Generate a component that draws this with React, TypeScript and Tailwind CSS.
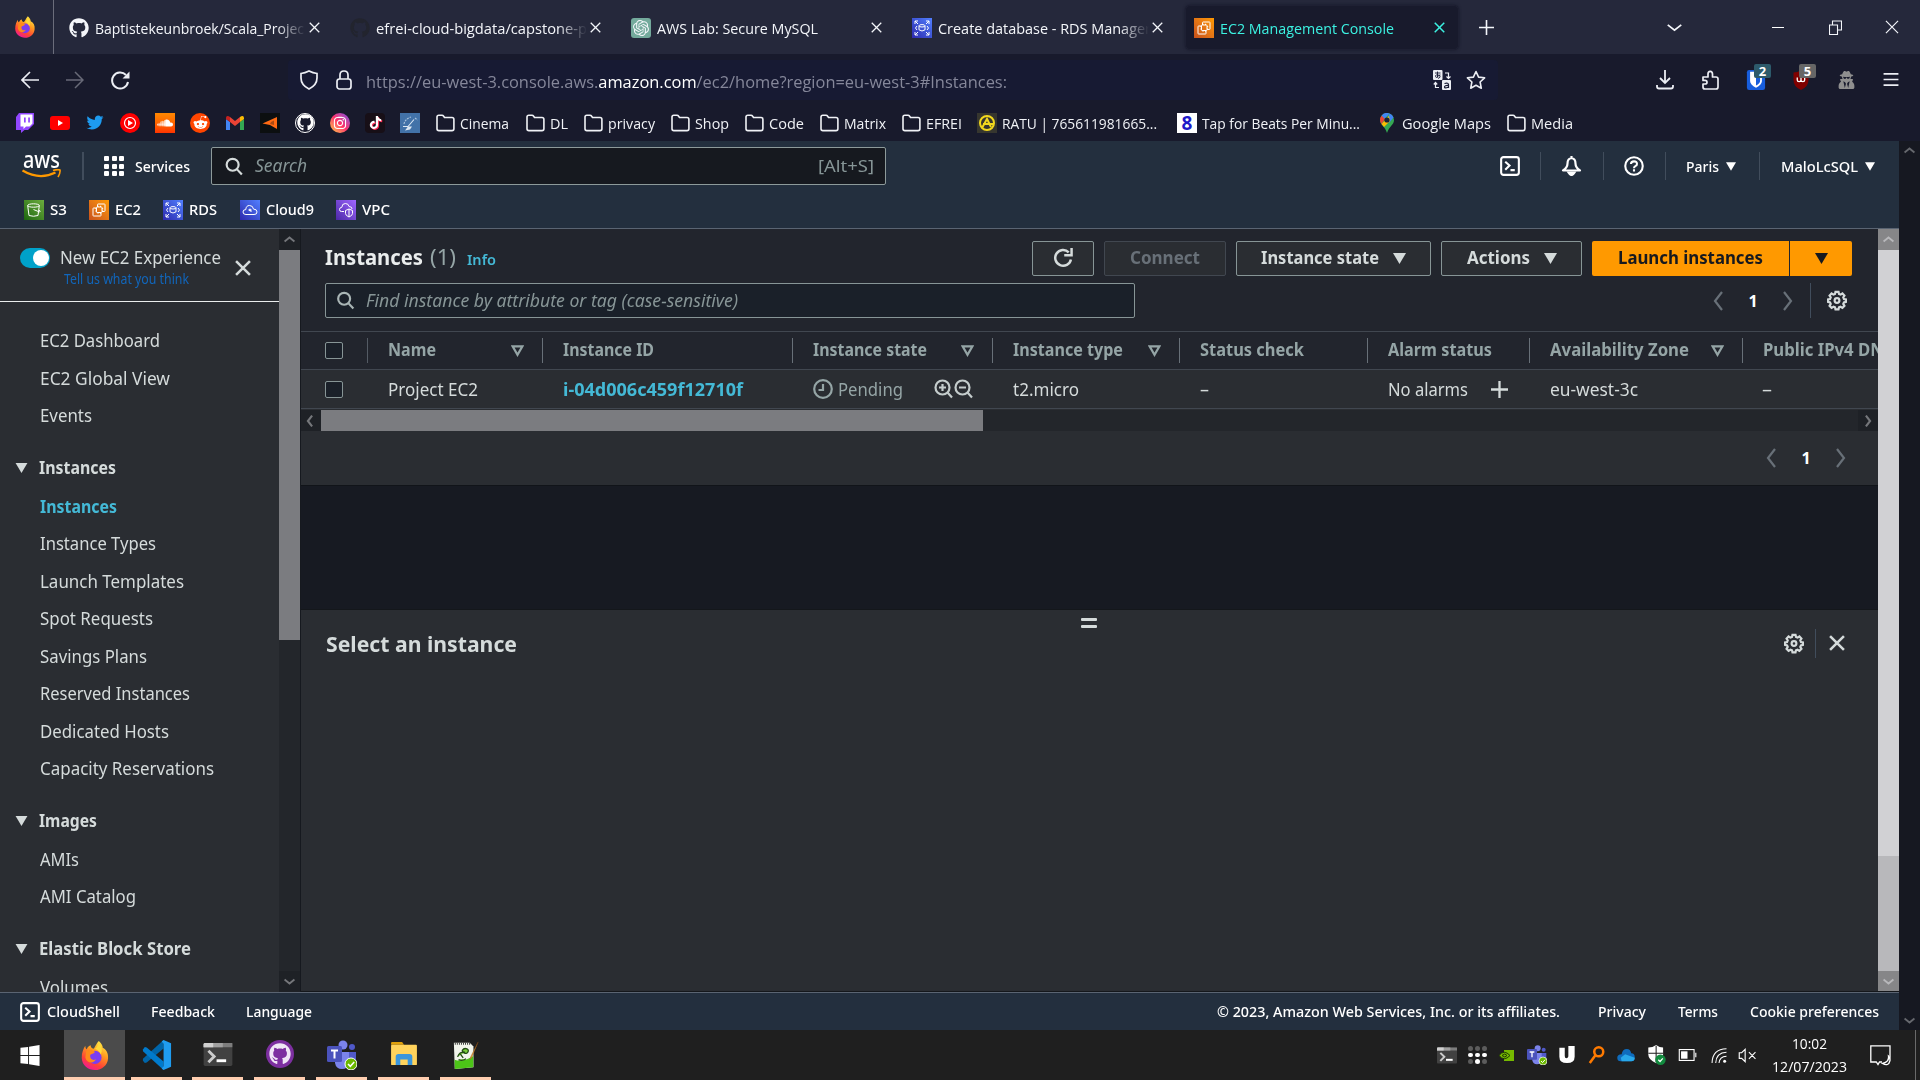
import React, { useLayoutEffect, useRef, useState } from "react";
import {
  FaTwitter, FaRedditAlien, FaSoundcloud, FaGithub, FaInstagram, FaTiktok,
  FaUserSecret,
} from "react-icons/fa";
import { SiOpenai } from "react-icons/si";

type FitProps = { w: number; c?: string; children: React.ReactNode };

/* A label that condenses its glyphs to fill exactly the given width. */
function Fit({ w, c = "", children }: FitProps) {
  const ref = useRef<HTMLSpanElement>(null);
  const [scale, setScale] = useState(1);
  useLayoutEffect(() => {
    const el = ref.current;
    if (!el) return;
    const cur = el.getBoundingClientRect().width;
    if (cur > 0) setScale(w / cur);
  }, [w]);
  return (
    <span className={"block shrink-0 whitespace-nowrap " + c} style={{ width: w }}>
      <span ref={ref} className="inline-block origin-left whitespace-nowrap" style={{ transform: `scaleX(${scale})` }}>
        {children}
      </span>
    </span>
  );
}

type IconProps = { c?: string; children?: React.ReactNode; box?: string; sw?: number };
function Svg({ c = "w-5 h-5", box = "0 0 20 20", sw = 1.6, children }: IconProps) {
  return (
    <svg viewBox={box} className={"block shrink-0 " + c} fill="none" stroke="currentColor" strokeWidth={sw}>
      {children}
    </svg>
  );
}

const Cross = ({ c = "w-[11px] h-[11px]", sw = 1.4 }: { c?: string; sw?: number }) => (
  <Svg c={c} box="0 0 12 12" sw={sw}><path d="M.8.8l10.4 10.4M11.2.8L.8 11.2" /></Svg>
);
const Tri = ({ c = "w-[13px] h-[11px]" }: { c?: string }) => (
  <Svg c={c} box="0 0 13 11" sw={0}><path d="M0 0h13L6.5 11z" fill="currentColor" /></Svg>
);
const Chevron = ({ dir, c, sw = 2 }: { dir: "l" | "r" | "u" | "d"; c: string; sw?: number }) => {
  const d = { l: "M9 1L2 10l7 9", r: "M2 1l7 9-7 9", u: "M1 9l9-7 9 7", d: "M1 2l9 7 9-7" }[dir];
  return <Svg c={c} box={dir === "l" || dir === "r" ? "0 0 11 20" : "0 0 20 11"} sw={sw}><path d={d} /></Svg>;
};
const Magnifier = ({ c = "w-[19px] h-[21px]", sw = 2.4 }: { c?: string; sw?: number }) => (
  <Svg c={c} box="0 0 19 21" sw={sw}><circle cx="8" cy="8.6" r="6.6" /><path d="M12.6 13.4l5.6 6" /></Svg>
);
const Gear = () => (
  <Svg c="w-[20px] h-[21px]" box="0 0 21 21" sw={2.3}>
    <path d="M8.9 1.4h3.2l.5 2.2 1.6.7 2-1.2 2.1 2.2-1.2 1.9.7 1.7 2.1.4v2.6l-2.1.6-.7 1.6 1.2 2-2.1 2.1-2-1.2-1.6.7-.5 2.1H8.9l-.5-2.1-1.6-.7-2 1.2-2.1-2.1 1.2-2-.7-1.6-2.1-.6V9.300l2.100-.4.7-1.700-1.200-1.900 2.100-2.200 2 1.200 1.600-.7z" />
    <circle cx="10.5" cy="10.5" r="2.5" />
  </Svg>
);
const ShellIcon = ({ c = "w-[21px] h-[21px]" }: { c?: string }) => (
  <Svg c={c} box="0 0 21 21" sw={2.2}><rect x="1.2" y="1.2" width="18.6" height="18.6" rx="2.5" /><path d="M5.5 6l4.500 4-4.500 4.500M11 14.800h4.500" /></Svg>
);
const Folder = () => (
  <Svg c="w-[19px] h-[18px]" box="0 0 19 18" sw={1.6}>
    <path d="M1 14.800V3Q1 1.200 2.800 1.200H6q1 0 1.500.8l1 1.500H16q1.900 0 1.900 1.900v9.300q0 1.900-1.900 1.900H2.900Q1 16.600 1 14.800z" />
  </Svg>
);

const Firefox = ({ c, id }: { c: string; id: string }) => (
  <svg viewBox="0 0 28 30" className={"block shrink-0 " + c}>
    <defs>
      <linearGradient id={id} x1=".8" y1="0" x2=".3" y2="1">
        <stop offset="0" stopColor="#fff14a" /><stop offset=".4" stopColor="#ff9a1f" /><stop offset=".75" stopColor="#ff4137" /><stop offset="1" stopColor="#f0189a" />
      </linearGradient>
    </defs>
    <path d="M18 0c3 3 4 5 4 7 4 2 6 6 5.500 11C27 25 21 30 14 30S.5 25 .3 17.500C.2 12 2 8 4 5c0 2 .5 3 1.500 3.500C6.500 6 8 4.800 9.500 4.500c0 2 1 3 3 3.500C14 7 15 3 18 0z" fill={`url(#${id})`} />
    <circle cx="14" cy="17" r="6.800" fill="#7a3df0" />
    <path d="M5 10c4-2 7-1 9 1.500-1 2-4 1.800-5 3C8.500 19 12 20.500 15 19c-2 5-10 4-11-2z" fill="#ff8a1a" />
    <path d="M18 1c3 4 4 9 2 13-1-3-3-5-6-6 2-1 3.500-4 4-7z" fill="#ffd93a" />
  </svg>
);

const Ec2Glyph = () => (<><path d="M7.500 8H4.600Q4 8 4 8.600v6.800q0 .6.600.6h6.800q.6 0 .6-.6V12.800" /><path d="M8.500 7V4.600q0-.6.600-.6h6.300q.6 0 .6.600v6.300q0 .6-.6.600H13" /><rect x="7.500" y="7" width="5.500" height="5.500" rx=".6" /><path d="M9 5.800V7M11.500 5.800V7M9 12.500v1.200M11.500 12.500v1.200M6.300 8.700h1.200M6.300 11h1.200M13 8.700h1.200M13 11h1.200" /></>);
function Service({ kind, c = "" }: { kind: string; c?: string }) {
  const bg: Record<string, string> = {
    S3: "bg-linear-to-tr from-[#1b660f] to-[#6cae3e]",
    EC2: "bg-linear-to-tr from-[#c8511b] to-[#ff9900]",
    RDS: "bg-linear-to-tr from-[#2e27ad] to-[#527fff]",
    Cloud9: "bg-linear-to-tr from-[#2e27ad] to-[#527fff]",
    VPC: "bg-linear-to-tr from-[#4d27a8] to-[#a166ff]",
  };
  return (
    <span className={"block w-5 h-5 shrink-0 text-white " + bg[kind] + " " + c}>
      <Svg sw={1}>
        {kind === "S3" && <><ellipse cx="9.5" cy="5.5" rx="5.8" ry="1.7" /><path d="M3.700 5.500L5 15.500q4.500 1.500 9 0l1.300-10M9.500 9.500l6 2.500q1.500-.5-.3-2" /></>}
        {kind === "EC2" && <Ec2Glyph />}
        {kind === "RDS" && <><path d="M3 6V3h3M3 3l3 3M14 3h3v3M17 3l-3 3M3 14v3h3M3 17l3-3M17 14v3h-3M17 17l-3-3" /><ellipse cx="10" cy="7.800" rx="3" ry="1.200" /><path d="M7 7.800v4q3 2.400 6 0v-4M5 8l-1.500 2L5 12M15 8l1.500 2-1.500 2" /></>}
        {kind === "Cloud9" && <><path d="M6 14.500q-3 0-3-2.500t2.800-2.400Q6 5.500 9.500 5.500t4 3.600q3.500 0 3.500 2.800t-3 2.600zM11 12V9.300H9v1.300h2" /></>}
        {kind === "VPC" && <><path d="M8 11.500H5.500Q3.500 11.500 3.500 9.500T5.800 7.300Q6 3.500 9.300 3.500t3.800 3q3 .2 3 2.500" /><path d="M9.500 10.500l3.500-1.500 3.500 1.500v3q0 2-3.500 3.500-3.500-1.500-3.500-3.500zM13 9v8" /></>}
      </Svg>
    </span>
  );
}

function Tab({ icon, text, tw, fade, lead }: { icon: React.ReactNode; text: string; tw: number; fade?: boolean; lead: string }) {
  return (
    <div className={"flex items-center w-[281px] h-full shrink-0 " + lead}>
      <span className="mt-[2px] shrink-0">{icon}</span>
      <div className={"ml-[6px] mt-[2px] w-[211px] overflow-hidden " + (fade ? "[mask-image:linear-gradient(to_right,black_86%,transparent_100%)]" : "")}>
        <Fit w={tw} c="text-[15px] leading-[22px]">{text}</Fit>
      </div>
      <Cross c="w-[11px] h-[11px] ml-[3px]" />
    </div>
  );
}

function TabBar() {
  return (
    <div className="flex items-center h-[54px] bg-[#25283b] text-[#f4f6fa]">
      <div className="w-[54px] h-full flex items-center pl-[15px] border-r border-[#6b6d7b]"><Firefox c="w-5 h-6" id="ffa" /></div>
      <Tab lead="ml-[15px]" icon={<FaGithub className="w-5 h-5 shrink-0" />} text="Baptistekeunbroek/Scala_Projec" tw={209} fade />
      <Tab lead="" icon={<FaGithub className="w-5 h-5 shrink-0 text-[#22242e]" />} text="efrei-cloud-bigdata/capstone-p" tw={211} fade />
      <Tab lead="" icon={<span className="w-5 h-5 rounded-[3px] bg-[#74aa9c] grid place-items-center shrink-0"><SiOpenai className="w-4 h-4" /></span>} text="AWS Lab: Secure MySQL" tw={161} />
      <Tab lead="" icon={<Service kind="RDS" />} text="Create database - RDS Manager" tw={213} fade />
      <div className="-ml-[8px] w-[274px] h-[45px] rounded-[5px] bg-[#181a2c] border border-[#1e2033] shadow-[0_0_3px_#15172a] flex items-center pl-[8px] text-[#3cf2e2]">
        <Service kind="EC2" c="mt-[2px]" />
        <Fit w={174} c="ml-[6px] mt-[2px] text-[15px] leading-[22px]">EC2 Management Console</Fit>
        <Cross c="w-[11px] h-[11px] ml-[40px]" sw={1.6} />
      </div>
      <Svg c="w-[15px] h-[15px] ml-[20px]" box="0 0 15 15" sw={1.6}><path d="M7.500 0v15M0 7.500h15" /></Svg>
      <Chevron dir="d" c="w-[15px] h-[9px] ml-[173px]" sw={2.400} />
      <span className="block w-[12px] h-[1px] bg-white ml-[90px]" />
      <Svg c="w-[13px] h-[15px] ml-[45px]" box="0 0 13 15" sw={1.100}><path d="M.5 5h8v9.500h-8zM3.500 5V1h9v9h-4" /></Svg>
      <Cross c="w-[14px] h-[14px] ml-[43px]" sw={1} />
    </div>
  );
}

function NavBar() {
  return (
    <div className="flex items-center h-[52px] bg-[#181a2c] text-[#eceef4]">
      <Svg c="w-[18px] h-[18px] ml-[21px]" box="0 0 18 18" sw={1.700}><path d="M18 9H1M9 1L1 9l8 8" /></Svg>
      <Svg c="w-[18px] h-[18px] ml-[27px] text-[#686a78]" box="0 0 18 18" sw={1.500}><path d="M0 9h17M9 1l8 8-8 8" /></Svg>
      <Svg c="w-[19px] h-[19px] ml-[27px]" box="0 0 19 19" sw={2}><path d="M15 4A8 8 0 1 0 17 11" /><path d="M18.500.5v7h-7z" fill="currentColor" stroke="none" /></Svg>
      <div className="flex items-center h-[40px] w-[1210px] bg-[#171a33] ml-[158px] rounded">
        <Svg c="w-[18px] h-[20px] ml-[12px]" box="0 0 18 20" sw={1.700}><path d="M9 1Q13 3 17 3.500V8q0 7-8 11Q1 15 1 8V3.500Q5 3 9 1z" /></Svg>
        <Svg c="w-[16px] h-[20px] ml-[18px]" box="0 0 16 20" sw={1.700}><rect x="1" y="9" width="14" height="10" rx="2.500" /><path d="M4 9V5q0-4 4-4t4 4v4" /></Svg>
        <Fit w={641} c="ml-[14px] text-[17px] leading-[24px] mt-[3px] text-[#85879a]">https://eu-west-3.console.aws.<span className="text-white">amazon.com</span>/ec2/home?region=eu-west-3#Instances:</Fit>
        <Svg c="w-[18px] h-[20px] ml-[426px]" box="0 0 18 20" sw={1.200}>
          <rect width="9.500" height="10" rx="1" fill="#eceef4" stroke="none" /><path d="M2 3h5.500M4.500 1.500v6M7 4.500Q3 9 2.500 6.500T7 5.500q1 2-2 3" stroke="#171a33" strokeWidth=".9" />
          <rect x="9" y="10" width="9" height="10" rx="1" fill="#eceef4" stroke="none" /><path d="M11.500 13.500q4-1 4 1v3.500M15.500 15.500q-4-.3-4 1.500t4 0" stroke="#171a33" />
          <path d="M12 3h3.500v5M13.500 6.500l2 2 2-2M6 17.500H2.500V13M.8 14.500l1.700-2 1.700 2" />
        </Svg>
        <Svg c="w-[20px] h-[20px] ml-[15px]" sw={1.600}><path d="M10 1.500l2.600 5.600 6 .7-4.500 4.200 1.200 6.200-5.300-3-5.300 3L5.900 12 1.400 7.800l6-.7z" strokeLinejoin="round" /></Svg>
      </div>
      <Svg c="w-[18px] h-[20px] ml-[158px]" box="0 0 18 20" sw={1.800}><path d="M9 0v13M4 8l5 5 5-5M1 15v1.500Q1 18.500 3 18.500h12q2 0 2-2V15" /></Svg>
      <Svg c="w-[19px] h-[20px] ml-[27px]" box="0 0 19 20" sw={1.700}><path d="M2 7h5V4q0-2.700 2.200-2.700T11.500 4v3H15q2 0 2 2v8q0 2-2 2H4q-2 0-2-2v-3h2q2 0 2-1.800T4 10.400H2z" strokeLinejoin="round" /></Svg>
      <div className="relative ml-[26px] w-5 h-5 -mt-px">
        <Svg c="w-5 h-[20px]" box="0 0 20 22" sw={0}><rect width="20" height="22" rx="2.500" fill="#175ddc" /><path d="M3.500 2h13v10q0 4-6.500 7.500Q3.500 16 3.500 12z" fill="#fff" /><path d="M10 4h4.500v8q0 2.500-4.500 5z" fill="#175ddc" /></Svg>
        <span className="absolute left-[8px] -top-[6px] w-[17px] h-[14px] rounded-[2px] bg-[#2d5a6b] text-white text-[13px] leading-[14px] text-center font-bold">2</span>
      </div>
      <div className="relative ml-[26px] w-[18px] h-[20px] -mt-px text-white">
        <Svg c="w-[18px] h-[20px]" box="0 0 18 24" sw={1.600}><path d="M9 0q4 3 9 3v9q0 8-9 12Q0 20 0 12V3q5 0 9-3z" fill="#800000" stroke="none" /><path d="M4.500 9v3q0 2 2.200 2T9 12V9v3q0 2 2.200 2t2.200-2V9" /></Svg>
        <span className="absolute left-[7px] -top-[6px] w-[17px] h-[14px] rounded-[2px] bg-[#666] text-white text-[13px] leading-[14px] text-center font-bold">5</span>
      </div>
      <FaUserSecret className="w-[17px] h-[18px] ml-[28px] shrink-0 text-[#8f8f8f]" />
      <Svg c="w-[16px] h-[13px] ml-[28px] -mt-px" box="0 0 16 14" sw={1.800}><path d="M0 1h16M0 7h16M0 13h16" /></Svg>
    </div>
  );
}

function Mark({ icon, text, w, gap, lead = "ml-[17px]" }: { icon?: React.ReactNode; text: string; w: number; gap?: string; lead?: string }) {
  return (
    <div className={"flex items-center shrink-0 " + lead}>
      {icon ?? <Folder />}
      <Fit w={w} c={"text-[15px] leading-[22px] mt-[1px] " + (gap ?? "ml-[5px]")}>{text}</Fit>
    </div>
  );
}

function Bookmarks() {
  return (
    <div className="flex items-center h-[35px] bg-[#181a2c] pl-[15px] pb-[2px] text-[#f0f2f6]">
      <div className="flex items-center gap-[15px]">
        <Svg sw={0}><path d="M4 0h15v11l-6 6H9.500L6 20v-3H1V4z" fill="#9146ff" /><path d="M5.500 1.500h12v9l-3 3H11L8.500 16v-2.500h-3z" fill="#fff" /><path d="M9 4.500h1.700v5H9zM13.200 4.500h1.700v5h-1.700z" fill="#9146ff" /></Svg>
        <Svg sw={0}><rect y="3" width="20" height="14" rx="3" fill="#f00" /><path d="M8 7l5 3-5 3z" fill="#fff" /></Svg>
        <FaTwitter className="w-5 h-[17px] text-[#1d9bf0]" />
        <Svg sw={1.200}><circle cx="10" cy="10" r="10" fill="#f00" stroke="none" /><circle cx="10" cy="10" r="5.500" stroke="#fff" /><path d="M8 7l5 3-5 3z" fill="#fff" stroke="none" /></Svg>
        <span className="w-5 h-5 bg-linear-to-b from-[#ff8800] to-[#ff3300] grid place-items-center"><FaSoundcloud className="w-4 h-4 text-white" /></span>
        <span className="w-5 h-5 rounded-full bg-[#ff4500] grid place-items-center"><FaRedditAlien className="w-[15px] h-[15px] text-white" /></span>
        <Svg sw={0}>
          <path d="M1 17h4V9L1 6z" fill="#4285f4" /><path d="M15 17h4V6l-4 3z" fill="#34a853" /><path d="M15 9l4-3V4.500Q18 2 15 4z" fill="#fbbc04" />
          <path d="M5 4l5 4 5-4v5l-5 4-5-4z" fill="#ea4335" /><path d="M1 6l4 3V4Q2 2 1 4.500z" fill="#c5221f" />
        </Svg>
        <Svg sw={0}><rect width="20" height="20" fill="#0c0f10" /><path d="M17 4L2.500 10.500 10 12l7 4z" fill="#ff6a13" /><path d="M11 9l3-1.500V12l-4-1z" fill="#0c0f10" opacity=".35" /></Svg>
        <span className="w-5 h-5 rounded-full border border-white grid place-items-center"><FaGithub className="w-[17px] h-[17px] text-white" /></span>
        <span className="w-5 h-5 rounded-full bg-linear-to-tr from-[#ffc532] via-[#fd2a6b] to-[#7a35e8] grid place-items-center"><FaInstagram className="w-[14px] h-[14px] text-white" /></span>
        <span className="w-5 h-5 rounded-[4px] bg-[#170f17] grid place-items-center"><FaTiktok className="w-[13px] h-[13px] text-white drop-shadow-[1px_1px_0_#fe2c55]" /></span>
        <Svg sw={1.100}><rect width="20" height="20" fill="#4272a8" stroke="none" /><path d="M4 11q1-5 7-7M15 5l2.500 2" stroke="#a9c2dc" strokeDasharray="2 1" /><path d="M3 13.500h5l6-7" stroke="#dce8f4" /><path d="M5 17.500l3-4h4l-2 3z" fill="#dce8f4" stroke="none" /></Svg>
      </div>
      <Mark text="Cinema" w={49} lead="ml-[16px]" />
      <Mark text="DL" w={18} />
      <Mark text="privacy" w={47} lead="ml-[16px]" />
      <Mark text="Shop" w={34} lead="ml-[16px]" />
      <Mark text="Code" w={35} lead="ml-[16px]" />
      <Mark text="Matrix" w={42} lead="ml-[16px]" />
      <Mark text="EFREI" w={36} lead="ml-[16px]" />
      <Mark text="RATU | 765611981665..." w={155} lead="ml-[15px]" icon={
        <Svg sw={2}><rect width="20" height="20" fill="#36362f" stroke="none" /><circle cx="10" cy="10" r="7" stroke="#f2d81e" /><path d="M5 15l5-9 4 8M6 11h11" stroke="#f2d81e" /></Svg>} />
      <Mark text="Tap for Beats Per Minu..." w={158} lead="ml-[20px]" icon={
        <span className="w-5 h-5 bg-white grid place-items-center"><span className="text-[#2018c8] font-bold text-[19px] leading-[20px]">8</span></span>} />
      <Mark text="Google Maps" w={89} lead="ml-[20px]" gap="ml-[8px]" icon={
        <Svg c="w-[14px] h-[20px]" box="0 0 14 20" sw={0}>
          <path d="M7 0a7 7 0 0 1 7 7c0 5-5 6-7 13C5 13 0 12 0 7a7 7 0 0 1 7-7z" fill="#34a853" /><path d="M1.500 2.700A7 7 0 0 1 9.500.5L4.500 6z" fill="#4285f4" />
          <path d="M9.500.5a7 7 0 0 1 4 4L9 10 7 7z" fill="#4285f4" /><path d="M1.500 2.700L5 6 1.500 11Q-1.500 7 1.500 2.700z" fill="#ea4335" /><path d="M1.500 11L9 3l1 5-6 6z" fill="#fbbc04" /><circle cx="7" cy="7" r="2.600" fill="#1b2038" />
        </Svg>} />
      <Mark text="Media" w={42} lead="ml-[16px]" />
    </div>
  );
}

const Divider = ({ c }: { c: string }) => <span className={"block w-px shrink-0 bg-[#414d5c] " + c} />;

function AwsHeader() {
  return (
    <header className="h-[88px] bg-[#232f3e] border-b border-[#5a6472] text-white font-medium">
      <div className="flex items-center h-[50px]">
        <div className="ml-[22px] w-[39px] h-[27px] -mt-px flex flex-col items-center">
          <Fit w={37} c="text-[23px] leading-[14px] h-[17px] font-medium">aws</Fit>
          <Svg c="w-[39px] h-[10px]" box="0 0 39 10" sw={2.200}><path d="M.5 1.500q17 10 33 2" stroke="#ff9900" /><path d="M31 1.500q5-1.500 7-.5.500 3-2 7" stroke="#ff9900" strokeWidth="1.600" /></Svg>
        </div>
        <span className="block w-[2px] h-[28px] bg-[#414d5c] ml-[21px]" />
        <div className="grid grid-cols-3 gap-[2.500px] ml-[20px] w-[20px] h-[20px]">
          {Array.from({ length: 9 }, (_, i) => <span key={i} className="bg-white rounded-[1px]" />)}
        </div>
        <Fit w={55} c="ml-[11px] text-[15px]">Services</Fit>
        <div className="ml-[21px] w-[675px] h-[38px] border border-[#8d9a9a] rounded-[2px] bg-[#16191f] flex items-center text-[#869596] font-normal">
          <Magnifier c="w-[18px] h-[19px] ml-[13px] text-[#d5dbdb]" />
          <Fit w={52} c="ml-[12px] text-[17.500px] -mt-px italic">Search</Fit>
          <Fit w={56} c="ml-[511px] text-[17px] -mt-px">[Alt+S]</Fit>
        </div>
        <ShellIcon c="w-[20px] h-[20px] ml-[614px]" />
        <Divider c="h-[28px] ml-[20px]" />
        <Svg c="w-[21px] h-[20px] ml-[20px]" box="0 0 21 20" sw={2.200}><path d="M10.500 2Q6.500 2.500 6.500 7.500q0 4-4.500 7h17q-4.500-3-4.500-7 0-5-4-5.500zM10.500 0v2" strokeLinejoin="round" /><path d="M7.500 16.500q3 5 6 0z" fill="currentColor" /></Svg>
        <Divider c="h-[28px] ml-[21px]" />
        <Svg c="w-[20px] h-[20px] ml-[20px]" box="0 0 21 21" sw={2.200}><circle cx="10.500" cy="10.500" r="9.200" /><path d="M7.300 8.500Q7.300 5.600 10.500 5.600t3.100 2.700q0 1.600-1.700 2.300-1.400.7-1.400 2.200M10.500 14v2.200" /></Svg>
        <Divider c="h-[28px] ml-[21px]" />
        <Fit w={33} c="ml-[20px] text-[15px]">Paris</Fit>
        <Tri c="w-[10px] h-[9px] ml-[7px]" />
        <Divider c="h-[28px] ml-[23px]" />
        <Fit w={77} c="ml-[21px] text-[15px]">MaloLcSQL</Fit>
        <Tri c="w-[10px] h-[9px] ml-[7px]" />
      </div>
      <div className="flex items-center h-[38px] text-[15px]">
        <div className="flex items-center ml-[24px]"><Service kind="S3" /><Fit w={17} c="ml-[6px] -mt-px">S3</Fit></div>
        <div className="flex items-center ml-[22px]"><Service kind="EC2" /><Fit w={26} c="ml-[6px] -mt-px">EC2</Fit></div>
        <div className="flex items-center ml-[22px]"><Service kind="RDS" /><Fit w={28} c="ml-[6px] -mt-px">RDS</Fit></div>
        <div className="flex items-center ml-[23px]"><Service kind="Cloud9" /><Fit w={48} c="ml-[6px] -mt-px">Cloud9</Fit></div>
        <div className="flex items-center ml-[22px]"><Service kind="VPC" /><Fit w={28} c="ml-[6px] -mt-px">VPC</Fit></div>
      </div>
    </header>
  );
}

const groups: { title?: string; tw?: number; items: [string, number][] }[] = [
  { items: [["EC2 Dashboard", 120], ["EC2 Global View", 130], ["Events", 52]] },
  { title: "Instances", tw: 77, items: [["Instances", 77], ["Instance Types", 116], ["Launch Templates", 144], ["Spot Requests", 113], ["Savings Plans", 107], ["Reserved Instances", 150], ["Dedicated Hosts", 129], ["Capacity Reservations", 174]] },
  { title: "Images", tw: 58, items: [["AMIs", 39], ["AMI Catalog", 96]] },
  { title: "Elastic Block Store", tw: 152, items: [["Volumes", 68]] },
];

function Sidebar() {
  return (
    <aside className="flex w-[301px] h-full shrink-0 border-r border-[#16191f]">
      <div className="w-[279px] h-full overflow-hidden bg-[#2a2d32] text-[#d5dbdb] text-[17.500px]">
        <div className="h-[73px] border-b border-[#eaeded] flex">
          <span className="block w-[30px] h-[20px] mt-[19px] ml-[20px] rounded-full bg-[#00a1c9] p-[2px] pl-[13px] shrink-0"><span className="block w-[16px] h-[16px] rounded-full bg-white" /></span>
          <div className="ml-[10px] pt-[17px]">
            <Fit w={161} c="leading-[22px]">New EC2 Experience</Fit>
            <Fit w={125} c="ml-[4px] text-[13.500px] leading-[18px] mt-[2px] text-[#1166bb]">Tell us what you think</Fit>
          </div>
          <Cross c="w-[16px] h-[16px] mt-[31px] ml-[14px]" sw={1.900} />
        </div>
        <div className="pt-[19px]">
          {groups.map((g, gi) => (
            <div key={gi} className={gi ? "pt-[15px]" : ""}>
              {g.title && (
                <div className="flex items-center h-[38px] ml-[15px]">
                  <Tri c="w-[13px] h-[10px] mt-px" /><Fit w={g.tw!} c="ml-[11px] font-bold text-[17px]">{g.title}</Fit>
                </div>
              )}
              {g.items.map(([t, w], i) => (
                <Fit key={t} w={w} c={"ml-[40px] h-[37.500px] " + (gi === 1 && i === 0 ? "leading-[40px] font-bold text-[#44b9d6] text-[17px]" : "leading-[38px]")}>{t}</Fit>
              ))}
            </div>
          ))}
        </div>
      </div>
      <div className="w-[21px] h-full bg-[#23262b] flex flex-col text-[#75777b]">
        <div className="h-[21px] bg-[#1e2126] grid place-items-center"><Chevron dir="u" c="w-[11px] h-[7px]" sw={3.500} /></div>
        <div className="h-[390px] bg-[#7b7c80]" />
        <div className="mt-auto h-[21px] bg-[#1e2126] grid place-items-center"><Chevron dir="d" c="w-[11px] h-[7px]" sw={3.500} /></div>
      </div>
    </aside>
  );
}

const Funnel = () => <Svg c="w-[13px] h-[12px] ml-auto mr-[18px]" box="0 0 13 12" sw={2.200}><path d="M1.600 1.300h9.800L6.500 9.800z" /></Svg>;

const cols: { w: string; label: string; lw: number; sort?: boolean }[] = [
  { w: "w-[175px]", label: "Name", lw: 48, sort: true },
  { w: "w-[250px]", label: "Instance ID", lw: 91 },
  { w: "w-[200px]", label: "Instance state", lw: 114, sort: true },
  { w: "w-[187px]", label: "Instance type", lw: 110, sort: true },
  { w: "w-[188px]", label: "Status check", lw: 104 },
  { w: "w-[162px]", label: "Alarm status", lw: 104 },
  { w: "w-[213px]", label: "Availability Zone", lw: 139, sort: true },
  { w: "w-[136px]", label: "Public IPv4 DNS", lw: 130 },
];

function Zoom({ plus }: { plus?: boolean }) {
  return <Svg c="w-[19px] h-[20px]" box="0 0 19 20" sw={2.200}><circle cx="8.500" cy="8.500" r="7" /><path d="M13.500 13.500l4.500 5M5 8.500h7" />{plus && <path d="M8.500 5v7" />}</Svg>;
}

const CheckBox = () => <span className="block w-[18px] h-[17px] rounded-[2px] border border-[#879596] bg-[#1a2029] ml-[24px]" />;

function InstanceTable() {
  return (
    <div>
      <div className="flex h-[39px] items-center border-y border-[#414750] bg-[#22252d] text-[#95a5a6] font-bold text-[17px] overflow-hidden">
        <div className="w-[67px] shrink-0 h-[25px] border-r border-[#545b64] flex items-center"><CheckBox /></div>
        {cols.map((c) => (
          <div key={c.label} className={"flex items-center h-[25px] pl-[20px] shrink-0 border-r border-[#687078] last:border-r-0 " + c.w}>
            <Fit w={c.lw} c="-mt-[2px]">{c.label}</Fit>
            {c.sort && <Funnel />}
          </div>
        ))}
      </div>
      <div className="flex h-[39px] items-center border-b border-[#414750] text-[#d5dbdb] text-[17.500px] overflow-hidden">
        <div className="w-[67px] shrink-0 pt-px"><CheckBox /></div>
        <div className="w-[175px] pl-[20px] shrink-0"><Fit w={90}>Project EC2</Fit></div>
        <div className="w-[250px] pl-[20px] shrink-0 pt-px"><Fit w={180} c="font-bold text-[17px] text-[#44b9d6]">i-04d006c459f12710f</Fit></div>
        <div className="w-[200px] pl-[20px] shrink-0 flex items-center text-[#95a5a6]">
          <Svg c="w-[20px] h-[20px]" sw={2.200}><circle cx="10" cy="10" r="8.800" /><path d="M10 5v6H5.500" /></Svg>
          <Fit w={65} c="ml-[5px]">Pending</Fit>
          <span className="flex ml-[31px] gap-px text-[#c4cccc]"><Zoom plus /><Zoom /></span>
        </div>
        <div className="w-[187px] pl-[20px] shrink-0"><Fit w={66}>t2.micro</Fit></div>
        <div className="w-[188px] pl-[20px] shrink-0"><Fit w={9}>–</Fit></div>
        <div className="w-[162px] pl-[20px] shrink-0 flex items-center"><Fit w={80}>No alarms</Fit><Svg c="w-[17px] h-[17px] ml-[23px]" box="0 0 17 17" sw={2.300}><path d="M8.500 0v17M0 8.500h17" /></Svg></div>
        <div className="w-[213px] pl-[20px] shrink-0"><Fit w={88}>eu-west-3c</Fit></div>
        <div className="pl-[19px] shrink-0"><Fit w={10}>–</Fit></div>
      </div>
      <div className="flex h-[21px] mt-[1px] bg-[#23262b] text-[#75777b]">
        <div className="w-[20px] bg-[#1e2126] flex items-center justify-center pr-[2px]"><Chevron dir="l" c="w-[8px] h-[12px]" sw={3.500} /></div>
        <div className="w-[662px] bg-[#7b7c80]" />
        <div className="ml-auto w-[20px] bg-[#1e2126] grid place-items-center"><Chevron dir="r" c="w-[8px] h-[12px]" sw={3.500} /></div>
      </div>
    </div>
  );
}

const Pager = ({ c }: { c: string }) => (
  <div className={"flex items-center text-[#687078] " + c}>
    <Chevron dir="l" c="w-[11px] h-[20px]" sw={2.200} />
    <span className="w-[10px] mx-[24px] text-center text-white font-bold text-[16px]">1</span>
    <Chevron dir="r" c="w-[11px] h-[20px]" sw={2.200} />
  </div>
);

function Main() {
  const btn = "flex items-center justify-center h-[35px] rounded-[2px] border border-[#879596] bg-[#2a2d32] text-[#d5dbdb] font-bold text-[17px] shrink-0 ";
  return (
    <main className="w-[1577px] h-full flex flex-col bg-[#2a2d32]">
      <div className="bg-[#22252d] h-[102px] shrink-0 pt-[12px]">
        <div className="flex items-center h-[35px] pl-[24px]">
          <Fit w={98} c="text-[22px] font-bold text-[#eaeded] leading-[30px] -mt-[6px]">Instances</Fit>
          <Fit w={26} c="ml-[7px] text-[22px] text-[#95a5a6] leading-[30px] -mt-[6px]">(1)</Fit>
          <Fit w={29} c="ml-[11px] mt-[2px] text-[15px] font-semibold text-[#44b9d6]">Info</Fit>
          <div className="flex gap-[10px] ml-[536px]">
            <div className={btn + "w-[62px]"}><Svg c="w-[20px] h-[20px] -mt-px" box="0 0 21 21" sw={2.600}><path d="M16.500 4.500A8.300 8.300 0 1 0 18.800 12" /><path d="M19.500 0v7.500h-7.700" /></Svg></div>
            <div className="flex items-center justify-center h-[35px] w-[122px] rounded-[2px] border border-[#414750] bg-[#2a2d32] text-[#687078] font-bold text-[17px]"><Fit w={70} c="-mt-[2px]">Connect</Fit></div>
            <div className={btn + "w-[195px]"}><Fit w={118} c="-mt-[2px]">Instance state</Fit><Tri c="w-[13px] h-[11px] ml-[14px]" /></div>
            <div className={btn + "w-[141px]"}><Fit w={63} c="-mt-[2px]">Actions</Fit><Tri c="w-[13px] h-[11px] ml-[14px]" /></div>
            <div className="flex gap-px text-[#16191f] font-bold text-[17px]">
              <div className="w-[197px] h-[35px] rounded-l-[2px] bg-[#ff9900] grid place-items-center"><Fit w={145} c="-mt-[2px]">Launch instances</Fit></div>
              <div className="w-[62px] h-[35px] rounded-r-[2px] bg-[#ff9900] grid place-items-center"><Tri c="w-[13px] h-[11px]" /></div>
            </div>
          </div>
        </div>
        <div className="flex items-center h-[35px] mt-[7px] pl-[24px]">
          <div className="w-[810px] h-[35px] border border-[#879596] rounded-[2px] bg-[#1a2029] flex items-center text-[#879596]">
            <Magnifier c="w-[19px] h-[19px] ml-[10px] text-[#a9b5b5]" />
            <Fit w={372} c="ml-[11px] text-[17.500px] italic">Find instance by attribute or tag (case-sensitive)</Fit>
          </div>
          <Pager c="ml-[578px]" />
          <Divider c="h-[35px] ml-[17px]" />
          <span className="ml-[16px] text-[#d5dbdb]"><Gear /></span>
        </div>
      </div>
      <InstanceTable />
      <div className="h-[55px] shrink-0 flex items-center border-b border-[#111419]"><Pager c="ml-[1465px] -mt-px" /></div>
      <div className="h-[123px] shrink-0 bg-[#171a22]" />
      <div className="flex-1 border-y border-[#14171b]">
        <div className="h-[10px] w-[16px] ml-[780px] mt-[8px] flex flex-col justify-between"><span className="h-[3px] bg-[#d5dbdb] rounded-[1px]" /><span className="h-[3px] bg-[#d5dbdb] rounded-[1px]" /></div>
        <div className="flex items-center h-[30px] pl-[25px] text-[#d5dbdb]">
          <Fit w={191} c="text-[22px] font-bold">Select an instance</Fit>
          <span className="ml-[1267px]"><Gear /></span>
          <Divider c="h-[29px] ml-[11px]" />
          <Cross c="w-[16px] h-[16px] ml-[13px]" sw={1.900} />
        </div>
      </div>
    </main>
  );
}

function AwsFooter() {
  return (
    <footer className="h-[38px] shrink-0 bg-[#232f3e] border-t border-[#5a6472] flex items-center text-white text-[15px] font-medium">
      <ShellIcon c="w-[20px] h-[20px] ml-[20px]" />
      <Fit w={73} c="ml-[7px]">CloudShell</Fit>
      <Fit w={64} c="ml-[31px]">Feedback</Fit>
      <Fit w={66} c="ml-[31px]">Language</Fit>
      <Fit w={343} c="ml-[905px]">© 2023, Amazon Web Services, Inc. or its affiliates.</Fit>
      <Fit w={48} c="ml-[38px]">Privacy</Fit>
      <Fit w={40} c="ml-[32px]">Terms</Fit>
      <Fit w={129} c="ml-[32px]">Cookie preferences</Fit>
    </footer>
  );
}

const Teams = ({ c }: { c: string }) => (
  <Svg c={c} box="0 0 30 30" sw={0}>
    <circle cx="16" cy="5" r="4.500" fill="#7b83eb" /><circle cx="25" cy="7" r="3" fill="#5059c9" />
    <path d="M20 12h9v9q-1 5-6 5h-3z" fill="#5059c9" /><path d="M8 12h14v11q-1 6-7 6t-7-6z" fill="#7b83eb" />
    <rect y="6" width="15" height="16" rx="1.500" fill="#4b53bc" /><path d="M4 10.500h7M7.500 10.500v8" stroke="#fff" strokeWidth="2" />
    <circle cx="24" cy="24" r="6" fill="#6bb700" stroke="#fff" strokeWidth="1" /><path d="M21 24l2.300 2.300L27.200 22" stroke="#fff" strokeWidth="1.500" />
  </Svg>
);
const Term = ({ c }: { c: string }) => (
  <Svg c={c} box="0 0 30 24" sw={3}><rect width="30" height="24" rx="1.500" fill="#414141" stroke="none" /><path d="M0 4.500V1.500Q0 0 1.500 0H30v4.500z" fill="#7d7d7d" stroke="none" /><path d="M0 4.500V1.500Q0 0 1.500 0H20v4.500z" fill="#a0a0a0" stroke="none" /><path d="M0 4.500V1.500Q0 0 1.500 0H10v4.500z" fill="#d0d0d0" stroke="none" /><path d="M5 8l6 6-6 6" stroke="#ccc" /><path d="M13.500 18.500h10" stroke="#fff" /></Svg>
);

function Cell({ active, lead, children }: { active?: boolean; lead: string; children: React.ReactNode }) {
  return (
    <div className={"h-full flex items-center justify-center shrink-0 border-b-[3px] border-[#ffceb0] pt-[3px] " + (active ? "w-[61px] bg-[#4b4b4b] " : "w-[51px] ") + lead}>
      {children}
    </div>
  );
}

function Taskbar() {
  return (
    <div className="h-[50px] bg-[#1f1f1f] flex items-center text-white">
      <Svg c="w-[20px] h-[21px] ml-[20px]" box="0 0 20 22" sw={0}><path d="M0 3l8-1v8.500H0zM9 1.800L20 0v10.500H9zM0 11.500h8V20l-8-1zM9 11.500h11V22L9 20.200z" fill="#fff" /></Svg>
      <Cell active lead="ml-[24px]"><Firefox c="w-[28px] h-[29px]" id="ffb" /></Cell>
      <Cell lead="ml-[6px]">
        <Svg c="w-[30px] h-[30px]" box="0 0 30 32" sw={0}><path d="M22 0v9L4 24l-2 .5-2-2.500v-2z" fill="#0065a9" /><path d="M0 10l2-2.500L4 8l18 15v9L0 12z" fill="#007acc" /><path d="M22 0l8 3.500v25L22 32l-2-1.500 2-2.500V4l-2-2.500z" fill="#1f9cf0" /></Svg>
      </Cell>
      <Cell lead="ml-[10px]"><Term c="w-[30px] h-[23px] -mt-[2px]" /></Cell>
      <Cell lead="ml-[11px]"><span className="w-[28px] h-[28px] -mt-[2px] rounded-full bg-[#7d2fa0] grid place-items-center"><FaGithub className="w-[22px] h-[22px] text-[#f0e6f6]" /></span></Cell>
      <Cell lead="ml-[11px]"><Teams c="w-[30px] h-[30px]" /></Cell>
      <Cell lead="ml-[11px]">
        <Svg c="w-[28px] h-[24px] -mt-[2px]" box="0 0 28 26" sw={0}><path d="M0 1q0-1 1-1h11l2 3H0z" fill="#e0a10c" /><rect y="3" width="28" height="22" rx="1" fill="#ffd35c" /><path d="M5 25v-9q0-3 3-3h12q3 0 3 3v9h-5v-6h-8v6z" fill="#3a96dd" /></Svg>
      </Cell>
      <Cell lead="ml-[11px]">
        <Svg c="w-[28px] h-[28px]" box="0 0 28 30" sw={0}><path d="M1 2h17l4 4v22L2 30z" fill="#f2f5ec" /><path d="M1.800 20q9 3 20-4v12L2 30z" fill="#4cc417" /><path d="M2 3h17" stroke="#333" strokeWidth="2" strokeDasharray="1 1.200" /><path d="M5 17q2-6 8-5M6 20q4 2 8-1M8 14l3 4M10 10q2-3 5-1.500t0 4.500q-4 1-5-3z" stroke="#234d14" strokeWidth="1.400" fill="#7ad03a" /><path d="M27 1L19 17l-1 3 2-2z" fill="#e9a33a" stroke="#8a4a10" strokeWidth=".4" /></Svg>
      </Cell>
      <div className="flex items-center ml-[946px]">
        <Term c="w-[20px] h-[17px]" />
        <div className="grid grid-cols-3 gap-[2px] w-[19px] h-[18px] ml-[11px]">
          {Array.from({ length: 9 }, (_, i) => <span key={i} className={"rounded-full " + ([3, 4, 5, 7].includes(i) ? "bg-white" : "bg-[#5c5c5c]")} />)}
        </div>
        <Svg c="w-[15px] h-[11px] ml-[12px]" box="0 0 15 11" sw={1}><path d="M5 0h10v11H5z" fill="#76b900" stroke="none" /><path d="M0 5.500Q5-1 11 5.500 5 12 0 5.500zM3 5.500q3-3 5 0-2 3-5 0" fill="#76b900" stroke="#1f3a05" /></Svg>
        <Teams c="w-[20px] h-[20px] ml-[13px]" />
        <Svg c="w-[16px] h-[18px] ml-[12px]" box="0 0 17 20" sw={0}><path d="M0 2h6v9q0 2.500 2 2.500t2-2V0h7v12q0 7-8.500 7T0 12z" fill="#fff" /></Svg>
        <Svg c="w-[17px] h-[18px] ml-[13px] text-[#ff7a00]" box="0 0 18 20" sw={2.800}><circle cx="11.500" cy="6.500" r="5" /><path d="M8 10l-6.500 9" /></Svg>
        <Svg c="w-[20px] h-[14px] ml-[11px]" box="0 0 20 16" sw={0}><path d="M4 15Q0 15 0 11t5-4q1-6 6-6 4 0 5 5 4 0 4 4.500T16 15z" fill="#0f6cbd" /><path d="M5 15l-1-4 5-4 11 4q0 4-4 4z" fill="#28a8ea" /></Svg>
        <Svg c="w-[20px] h-[20px] ml-[11px]" box="0 0 20 23" sw={0}><path d="M9 0q4 3 8 3v8q0 6-8 10Q0 17 0 11V3q5 0 9-3z" fill="#fff" /><path d="M9 1v19M0 9.500h17" stroke="#1f1f1f" strokeWidth="1.200" /><circle cx="14" cy="17" r="6" fill="#128a3e" /><path d="M11.500 17l2 2 3.200-3.600" stroke="#fff" strokeWidth="1.400" /></Svg>
        <Svg c="w-[19px] h-[12px] ml-[11px]" box="0 0 19 13" sw={1.200}><rect x=".6" y=".6" width="16" height="11.800" /><path d="M18.500 4v5" /><rect x="2.500" y="2.500" width="7" height="8" fill="#fff" stroke="none" /></Svg>
        <Svg c="w-[16px] h-[15px] ml-[14px]" box="0 0 16 16" sw={1.100}><path d="M.6 16Q1 1 16 .8M4.500 16Q5 5 16 4.600M8 16q.5-7 8-7.300" /><circle cx="14" cy="14" r="1.600" fill="#fff" stroke="none" /></Svg>
        <Svg c="w-[19px] h-[15px] ml-[11px]" box="0 0 19 16" sw={1.200}><path d="M.7 5v6h2.600L7 14.500v-13L3.300 5zM11 4.500l7 7M18 4.500l-7 7" /></Svg>
      </div>
      <div className="flex flex-col items-center ml-[14px] w-[76px] -mt-px text-[15px] leading-[23px]">
        <Fit w={35}>10:02</Fit>
        <Fit w={75}>12/07/2023</Fit>
      </div>
      <Svg c="w-[21px] h-[21px] ml-[23px]" box="0 0 21 21" sw={1.300}><path d="M12 17H9.500L8 19.500 6.300 17H.8V.8H20v12" /><path d="M18.500 11q1 6-6 7.500 6 3.500 7.500-3 .3-3-1.500-4.500z" /></Svg>
      <span className="ml-auto mr-[4px] w-px h-full bg-[#6a6a6a]" />
    </div>
  );
}

export default function App() {
  return (
    <div className="w-[1920px] h-[1080px] overflow-hidden flex flex-col bg-[#181a2c] [font-family:'Open_Sans','Noto_Sans',sans-serif]">
      <TabBar />
      <NavBar />
      <Bookmarks />
      <div className="flex h-[889px] shrink-0">
        <div className="w-[1899px] flex flex-col [font-family:'Noto_Sans','Open_Sans',sans-serif]">
          <AwsHeader />
          <div className="flex h-[763px] overflow-hidden">
            <Sidebar />
            <Main />
            <div className="w-[21px] h-full flex flex-col text-[#b8b8bb] bg-[#b8b8bb] border-b border-[#14171b]">
              <div className="h-[21px] bg-[#868688] grid place-items-center"><Chevron dir="u" c="w-[11px] h-[7px]" sw={3.500} /></div>
              <div className="h-[606px] bg-[#d1d1d4]" />
              <div className="mt-auto h-[20px] bg-[#868688] grid place-items-center"><Chevron dir="d" c="w-[11px] h-[7px]" sw={3.500} /></div>
            </div>
          </div>
          <AwsFooter />
        </div>
        <div className="w-[21px] bg-[#161821] flex flex-col items-center justify-between py-[6px] text-[#66686e]">
          <Chevron dir="u" c="w-[11px] h-[7px]" sw={3.500} />
          <Chevron dir="d" c="w-[11px] h-[7px]" sw={3.500} />
        </div>
      </div>
      <Taskbar />
    </div>
  );
}
